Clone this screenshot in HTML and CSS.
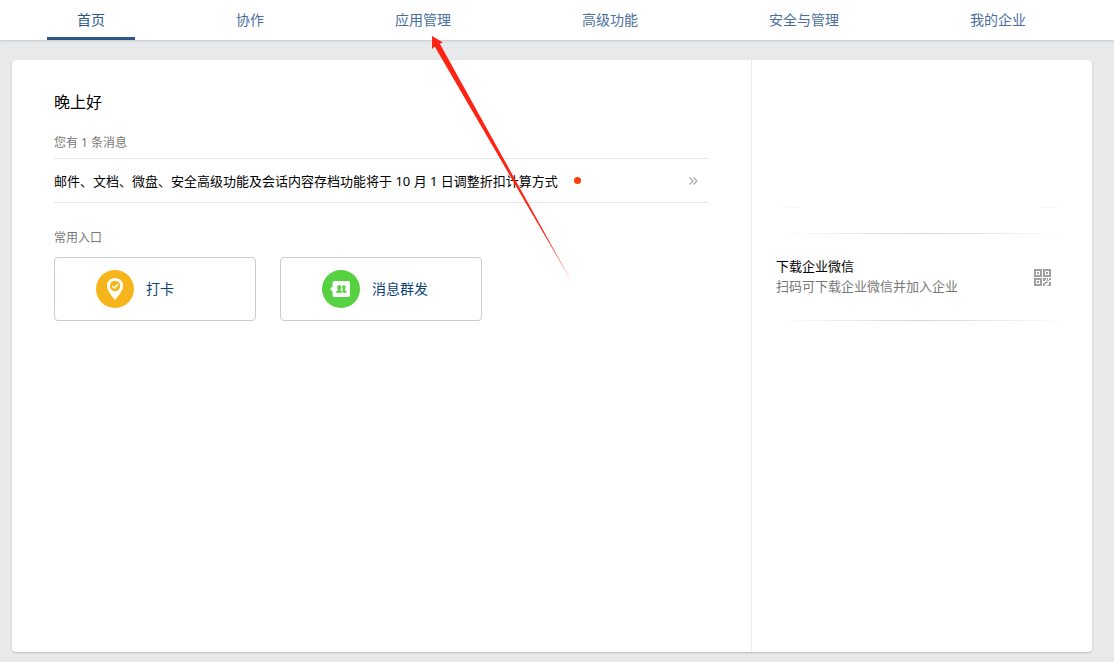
FILE: index.html
```
<!DOCTYPE html>
<html lang="zh-CN">
<head>
    <meta charset="UTF-8">
    <meta name="viewport" content="width=device-width, initial-scale=1.0">
    <title>企业微信</title>
    <link rel="stylesheet" href="styles.css">
</head>
<body>
    <header class="header">
        <nav class="nav">
            <a class="nav-link active" href="#">首页</a>
            <a class="nav-link" href="#">协作</a>
            <a class="nav-link" href="#">应用管理</a>
            <a class="nav-link" href="#">高级功能</a>
            <a class="nav-link" href="#">安全与管理</a>
            <a class="nav-link" href="#">我的企业</a>
        </nav>
    </header>

    <div class="panel">
        <main class="main">
            <h1 class="greeting">晚上好</h1>

            <h2 class="section-title">您有 1 条消息</h2>
            <a class="message" href="#">
                <span>邮件、文档、微盘、安全高级功能及会话内容存档功能将于 10 月 1 日调整折扣计算方式</span>
                <span class="dot"></span>
                <svg class="message-more" width="9" height="8" viewBox="0 0 9 8">
                    <path d="M0.5 0.5L4 4L0.5 7.5M4.5 0.5L8 4L4.5 7.5" fill="none" stroke="#a8a8a8" stroke-width="1.2"/>
                </svg>
            </a>

            <h2 class="section-title">常用入口</h2>
            <div class="entries">
                <a class="entry" href="#">
                    <svg width="38" height="38" viewBox="0 0 38 38">
                        <circle cx="19" cy="19" r="19" fill="#f7b51c"/>
                        <path d="M19 8C14.2 8 11 11.6 11 15.8C11 20.5 15.8 26 19 30C22.2 26 27.2 20.5 27.2 15.8C27.2 11.6 23.8 8 19 8Z" fill="#fff"/>
                        <circle cx="19" cy="16" r="5.2" fill="#f7b51c"/>
                        <path d="M16.3 16L18.4 18L22 14.3" fill="none" stroke="#fff" stroke-width="1.5"/>
                    </svg>
                    <span>打卡</span>
                </a>
                <a class="entry" href="#">
                    <svg width="38" height="38" viewBox="0 0 38 38">
                        <circle cx="19" cy="19" r="19" fill="#56d141"/>
                        <path d="M12.5 11H26C27.3 11 28 11.7 28 13V25C28 26.3 27.3 27 26 27H12.5C11.2 27 10.5 26.3 10.5 25V21.5L8 19L10.5 16.5V13C10.5 11.7 11.2 11 12.5 11Z" fill="#fff"/>
                        <path d="M21.8 15.2C23.2 15.2 23.7 16.2 23.6 17.4C23.5 18.6 22.8 19.2 22.8 20C22.8 21 24.8 21 24.8 22.7H21.4C21.2 21.4 20.2 20.8 20.2 20.2C20.5 19.8 20.9 19.4 20.7 18.9C19.7 17 20.2 15.2 21.8 15.2Z" fill="#56d141"/>
                        <path d="M17.2 15C18.8 15 19.3 16 19.2 17.4C19.1 18.6 18.4 19.2 18.4 20C18.4 21 20.7 21 20.7 22.7H13.7C13.7 21 16 21 16 20C16 19.2 15.3 18.6 15.2 17.4C15.1 16 15.6 15 17.2 15Z" fill="#56d141"/>
                    </svg>
                    <span>消息群发</span>
                </a>
            </div>
        </main>

        <aside class="sidebar">
            <div class="divider divider-ends"></div>
            <div class="divider"></div>
            <div class="download">
                <div>
                    <h3 class="download-title">下载企业微信</h3>
                    <p class="download-desc">扫码可下载企业微信并加入企业</p>
                </div>
                <button class="qr-btn" type="button" aria-label="二维码">
                    <svg width="18" height="18" viewBox="0 0 18 18" fill="#a0a0a0">
                        <path d="M0 0H8V8H0ZM2 2V6H6V2ZM3 3H5V5H3Z" fill-rule="evenodd"/>
                        <path d="M9 0H17V8H9ZM11 2V6H15V2ZM12 3H14V5H12Z" fill-rule="evenodd"/>
                        <path d="M0 9H8V17H0ZM2 11V15H6V11ZM3 12H5V14H3Z" fill-rule="evenodd"/>
                        <path d="M9 9H12V11H11V12H9ZM13 9H14V11H15V12H13ZM15 9H17V11H15ZM12 12H13V13H14V14H12V15H11V17H9V14H11V13H12ZM15 13H17V17H13V16H15Z"/>
                    </svg>
                </button>
            </div>
            <div class="divider"></div>
        </aside>
    </div>

    <!-- Pointer to the app management tab -->
    <svg class="arrow" width="144" height="248" viewBox="0 0 144 248">
        <defs>
            <linearGradient id="arrowFade" gradientUnits="userSpaceOnUse" x1="0" y1="0" x2="0" y2="248">
                <stop offset="0.8" stop-color="#ff2314"/>
                <stop offset="1" stop-color="#ff2314" stop-opacity="0.5"/>
            </linearGradient>
        </defs>
        <path d="M2 0L13 6.5L9.7 7.5L143 248L4.7 10.5L2 13Z" fill="url(#arrowFade)"/>
    </svg>
</body>
</html>
```
FILE: styles.css
```
* {
    margin: 0;
    padding: 0;
    box-sizing: border-box;
}

body {
    position: relative;
    display: flex;
    flex-direction: column;
    min-height: 100vh;
    background: #e8e9eb;
    font-family: "Noto Sans", "Noto Sans CJK SC", sans-serif;
    font-size: 13px;
    line-height: 20px;
    color: #000;
}

a {
    color: inherit;
    text-decoration: none;
}

svg {
    display: block;
    flex-shrink: 0;
}

.header {
    background: #fff;
    box-shadow: 0 1px 2px rgba(0, 0, 0, 0.15);
}

.nav {
    display: flex;
    justify-content: space-between;
    padding: 0 58px 0 47px;
}

.nav-link {
    height: 40px;
    padding: 0 30px;
    border-bottom: 3px solid transparent;
    font-size: 14px;
    line-height: 40px;
    color: #4a6f9d;
}

.nav-link.active {
    border-bottom-color: #2d5689;
    color: #2d5689;
}

.panel {
    flex: 1;
    display: flex;
    margin: 20px 22px 10px 12px;
    background: #fff;
    border-radius: 4px;
    box-shadow: 0 1px 2px rgba(0, 0, 0, 0.2);
}

.main {
    flex: 1;
    padding: 30px 42px;
}

.greeting {
    margin-bottom: 19px;
    font-size: 16px;
    font-weight: normal;
    line-height: 24px;
}

.section-title {
    font-size: 12px;
    font-weight: normal;
    line-height: 20px;
    color: #787878;
}

.message {
    display: flex;
    align-items: center;
    height: 45px;
    margin: 5px 0 25px;
    border-top: 1px solid #e4e6e9;
    border-bottom: 1px solid #e4e6e9;
}

.dot {
    width: 7px;
    height: 7px;
    margin-left: 16px;
    border-radius: 50%;
    background: #ff3b0a;
}

.message-more {
    margin-left: auto;
    margin-right: 11px;
}

.entries {
    display: flex;
    gap: 24px;
    margin-top: 9px;
}

.entry {
    display: flex;
    align-items: center;
    gap: 12px;
    width: 202px;
    height: 64px;
    padding-left: 41px;
    border: 1px solid #c9cbd4;
    border-radius: 4px;
    font-size: 14px;
    color: #0d4478;
}

.sidebar {
    width: 341px;
    padding: 147px 24px 0;
    border-left: 1px dotted #dedede;
}

.divider {
    height: 1px;
    background: linear-gradient(to right, transparent, #d2d5d5, transparent);
}

.divider-ends {
    margin-bottom: 25px;
    background: linear-gradient(to right, transparent, #f4f4f4 8%, transparent 8%, transparent 91%, #f4f4f4 91%, transparent);
}

.download {
    display: flex;
    justify-content: space-between;
    align-items: center;
    padding: 22px 16px 24px 0;
}

.download-title {
    font-size: 13px;
    font-weight: normal;
}

.download-desc {
    color: #787878;
}

.qr-btn {
    padding-top: 4px;
    border: none;
    background: none;
    cursor: pointer;
}

.arrow {
    position: absolute;
    top: 36px;
    left: 430px;
    pointer-events: none;
}
```
